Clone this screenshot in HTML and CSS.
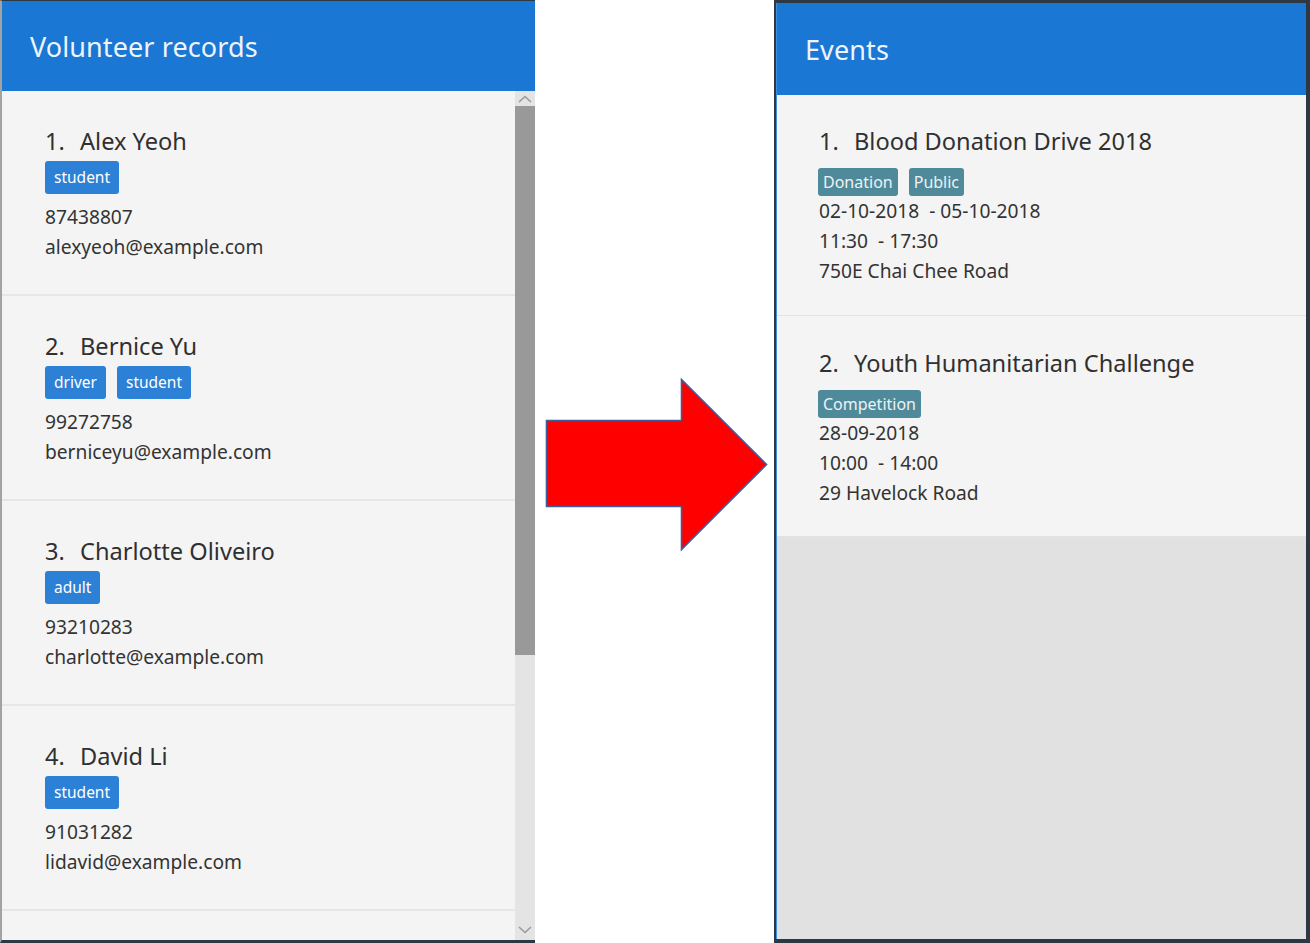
FILE: index.html
```html
<!DOCTYPE html>
<html>
<head>
<meta charset="utf-8">
<link rel="stylesheet" href="styles.css">
</head>
<body>
<div class="page">
  <section class="panel panel-left">
    <header class="panel-head">Volunteer records</header>
    <div class="panel-body">
      <div class="list">
        <div class="vcard">
          <div class="name"><span class="idx">1.</span>Alex Yeoh</div>
          <div class="tags"><span class="tag">student</span></div>
          <div class="line">87438807</div>
          <div class="line">alexyeoh@example.com</div>
        </div>
        <div class="vcard">
          <div class="name"><span class="idx">2.</span>Bernice Yu</div>
          <div class="tags"><span class="tag">driver</span><span class="tag">student</span></div>
          <div class="line">99272758</div>
          <div class="line">berniceyu@example.com</div>
        </div>
        <div class="vcard">
          <div class="name"><span class="idx">3.</span>Charlotte Oliveiro</div>
          <div class="tags"><span class="tag">adult</span></div>
          <div class="line">93210283</div>
          <div class="line">charlotte@example.com</div>
        </div>
        <div class="vcard">
          <div class="name"><span class="idx">4.</span>David Li</div>
          <div class="tags"><span class="tag">student</span></div>
          <div class="line">91031282</div>
          <div class="line">lidavid@example.com</div>
        </div>
        <div class="vcard"></div>
      </div>
      <div class="scrollbar">
        <div class="sb-btn">
          <svg width="14" height="8" viewBox="0 0 14 8"><path d="M1 7 L7 1.5 L13 7" fill="none" stroke="#9a9a9a" stroke-width="1.6"/></svg>
        </div>
        <div class="sb-thumb"></div>
        <div class="sb-track"></div>
        <div class="sb-btn sb-btn-down">
          <svg width="14" height="8" viewBox="0 0 14 8"><path d="M1 1 L7 6.5 L13 1" fill="none" stroke="#9a9a9a" stroke-width="1.6"/></svg>
        </div>
      </div>
    </div>
  </section>

  <div class="middle">
    <svg class="arrow" width="224" height="174" viewBox="0 0 224 174">
      <polygon points="1.5,42.5 136.5,42.5 136.5,1.5 221.5,86.5 136.5,171.5 136.5,128.5 1.5,128.5" fill="#ff0000" stroke="#3f5d9c" stroke-width="1.6" stroke-linejoin="miter"/>
    </svg>
  </div>

  <section class="panel panel-right">
    <div class="panel-inner">
      <header class="panel-head panel-head-right">Events</header>
      <div class="events">
        <div class="ecard">
          <div class="name"><span class="idx">1.</span>Blood Donation Drive 2018</div>
          <div class="etags"><span class="etag">Donation</span><span class="etag">Public</span></div>
          <div class="line">02-10-2018&nbsp; - 05-10-2018</div>
          <div class="line">11:30&nbsp; - 17:30</div>
          <div class="line">750E Chai Chee Road</div>
        </div>
        <div class="ecard">
          <div class="name"><span class="idx">2.</span>Youth Humanitarian Challenge</div>
          <div class="etags"><span class="etag">Competition</span></div>
          <div class="line">28-09-2018</div>
          <div class="line">10:00&nbsp; - 14:00</div>
          <div class="line">29 Havelock Road</div>
        </div>
      </div>
    </div>
  </section>
</div>
</body>
</html>
```

FILE: styles.css
```css
* { box-sizing: border-box; }
html, body { margin: 0; padding: 0; background: #ffffff; }
body {
  font-family: "Noto Sans", "Open Sans", sans-serif;
  color: #333333;
  width: 1310px;
  height: 943px;
  overflow: hidden;
}
.page {
  display: flex;
  width: 1310px;
  height: 943px;
}
.panel {
  display: flex;
  flex-direction: column;
  height: 943px;
  overflow: hidden;
}
.panel-left {
  width: 535px;
  border-top: 1px solid #2e3843;
  border-left: 2px solid #a3a3a3;
  border-bottom: 3px solid #2e3843;
}
.panel-right {
  width: 536px;
  border-top: 3px solid #2e3843;
  border-left: 2px solid #2e3843;
  border-right: 4px solid #2e3843;
  border-bottom: 4px solid #2e3843;
  background: #e1e1e1;
}
.panel-inner {
  flex: 1;
  border-left: 1px solid #3d8fe0;
  display: flex;
  flex-direction: column;
}
.panel-head {
  flex: none;
  height: 90px;
  background: #1a77d3;
  color: #eef4fb;
  font-size: 27px;
  letter-spacing: 0.1px;
  padding-left: 28px;
  display: flex;
  align-items: center;
}
.panel-head-right {
  height: 92px;
  padding-left: 28px;
}
.panel-body {
  flex: 1;
  display: flex;
  min-height: 0;
}
.list {
  flex: 1;
  background: #f4f4f4;
  overflow: hidden;
}
.vcard {
  height: 205px;
  padding: 35px 0 0 43px;
  border-bottom: 2px solid #e6e6e6;
}
.name {
  font-size: 23.6px;
  line-height: 30px;
  color: #303030;
}
.idx {
  display: inline-block;
  width: 35px;
}
.tags {
  display: flex;
  gap: 11px;
  margin-top: 5px;
  margin-bottom: 8px;
}
.tag {
  background: #2c80d5;
  color: #ffffff;
  font-size: 15.5px;
  height: 33px;
  line-height: 33px;
  padding: 0 9px;
  border-radius: 3px;
}
.line {
  font-size: 19.2px;
  line-height: 30px;
  color: #333333;
}
.scrollbar {
  flex: none;
  width: 20px;
  background: #e4e4e4;
  display: flex;
  flex-direction: column;
}
.sb-btn {
  height: 15px;
  display: flex;
  align-items: center;
  justify-content: center;
  background: #e4e4e4;
}
.sb-thumb {
  height: 549px;
  background: #999999;
}
.sb-track { flex: 1; }
.sb-btn-down {
  height: 18px;
  align-items: flex-start;
  padding-top: 4px;
}
.middle {
  width: 239px;
  display: flex;
  align-items: flex-start;
  padding-top: 378px;
  padding-left: 10px;
}
.events {
  flex: 1;
}
.ecard {
  height: 221px;
  background: #f4f4f4;
  padding: 31px 0 0 41px;
  border-bottom: 1px solid #e3e3e3;
}
.ecard .name {
  padding-left: 1px;
}
.ecard .line {
  padding-left: 1px;
}
.ecard + .ecard {
  padding-top: 32px;
}
.etags {
  display: flex;
  gap: 11px;
  margin-top: 12px;
}
.etag {
  background: #4f8a9b;
  color: #eef2f4;
  font-size: 16px;
  height: 28px;
  line-height: 28px;
  padding: 0 5px;
  border-radius: 3px;
}
```
